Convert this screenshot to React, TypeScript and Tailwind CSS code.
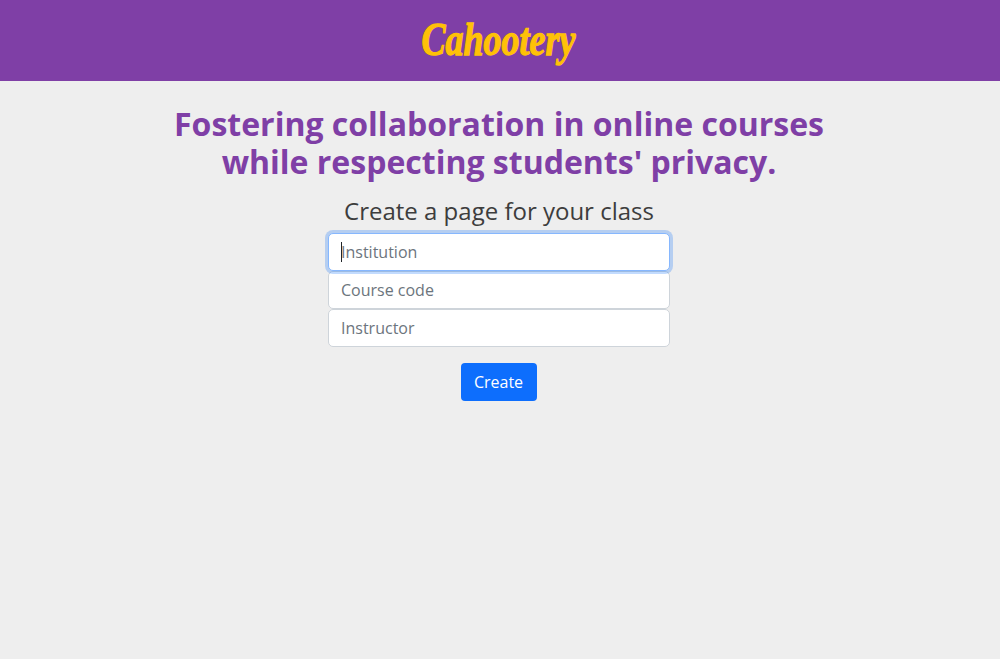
export default function App() {
  return (
    <div className="min-h-[659px] bg-[#eeeeee] font-['Open_Sans','Noto_Sans',sans-serif]">
      <header className="flex h-[81px] items-center justify-center bg-[#7f3fa6] pr-[3px]">
        <span className="mb-[4px] origin-center scale-y-[1.3] font-['Liberation_Serif',serif] text-[36px] font-bold italic leading-none text-[#ffc107] [-webkit-text-stroke:1px_#ffc107]">
          Cahootery
        </span>
      </header>

      <main className="flex flex-col items-center pr-[3px] pt-6">
        <h1 className="ml-px text-center text-[32px] font-bold leading-[38px] text-[#7f3fa6]">
          Fostering collaboration in online courses
          <br />
          while respecting students' privacy.
        </h1>

        <form className="mt-[15px] flex w-[342px] flex-col items-center">
          <h2 className="mb-2 ml-px text-2xl leading-[29px] text-[#3d3d3d]">Create a page for your class</h2>
          <div className="relative w-full">
            <input
              autoFocus
              placeholder="Institution"
              className="h-[38px] w-full rounded-[5px] border border-[#86b7fe] bg-white pl-[12.5px] pr-3 text-base text-[#212529] shadow-[0_0_0_3px_rgba(13,110,253,0.25)] outline-none placeholder:text-[#6c757d]"
            />
            {/* caret, the headless browser does not paint it */}
            <span className="absolute left-[13px] top-[9px] h-5 w-px bg-[#212529]" />
          </div>
          <input
            placeholder="Course code"
            className="h-[38px] w-full rounded-[5px] border border-[#ced4da] bg-white pl-[12.5px] pr-3 text-base text-[#212529] outline-none placeholder:text-[#6c757d]"
          />
          <input
            placeholder="Instructor"
            className="h-[38px] w-full rounded-[5px] border border-[#ced4da] bg-white pl-[12.5px] pr-3 text-base text-[#212529] outline-none placeholder:text-[#6c757d]"
          />
          <button
            type="button"
            className="mt-4 h-[38px] w-[76px] rounded-[4px] bg-[#0d6efd] text-base text-white"
          >
            Create
          </button>
        </form>
      </main>
    </div>
  );
}
